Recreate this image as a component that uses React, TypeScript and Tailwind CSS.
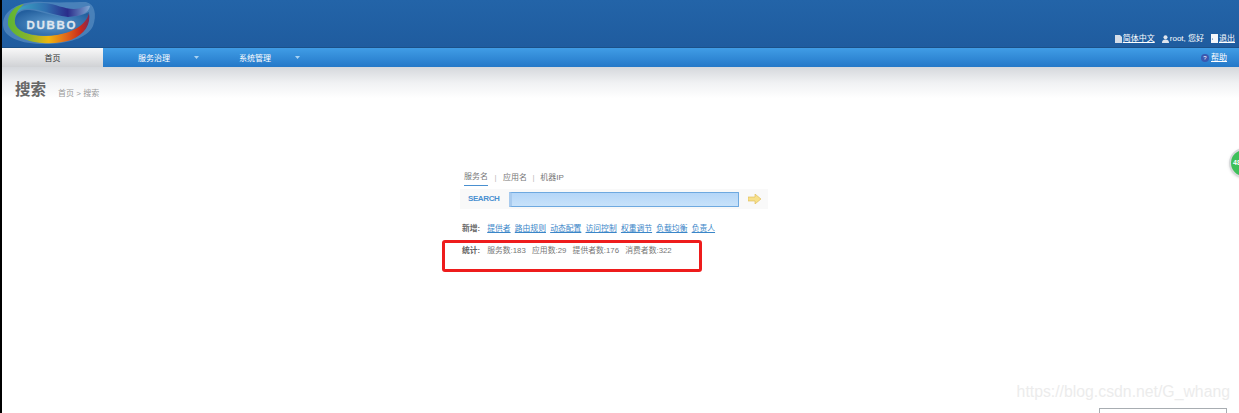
const CJK = "font-['Liberation_Sans','Noto_Sans_CJK_SC',sans-serif]";

const addLinks = ["提供者", "路由规则", "动态配置", "访问控制", "权重调节", "负载均衡", "负责人"];
const stats = ["服务数:183", "应用数:29", "提供者数:176", "消费者数:322"];

function Logo() {
  return (
    <svg width="98" height="47" viewBox="0 0 98 47" className="shrink-0">
      <defs>
        <linearGradient id="ring" x1="0" y1="0" x2="1" y2="0">
          <stop offset="0" stopColor="#5cb534" />
          <stop offset="0.25" stopColor="#86b52c" />
          <stop offset="0.5" stopColor="#efb60f" />
          <stop offset="0.72" stopColor="#e0651a" />
          <stop offset="0.9" stopColor="#c8281c" />
          <stop offset="1" stopColor="#7c2a58" />
        </linearGradient>
        <linearGradient id="top" x1="0" y1="0" x2="1" y2="0">
          <stop offset="0" stopColor="#3fb4c8" />
          <stop offset="0.45" stopColor="#2f6fb0" />
          <stop offset="0.72" stopColor="#2a2c8a" />
          <stop offset="1" stopColor="#7fa8d4" />
        </linearGradient>
        <radialGradient id="core" cx="0.5" cy="0.55" r="0.6">
          <stop offset="0" stopColor="#5f9ccf" />
          <stop offset="1" stopColor="#235f9e" />
        </radialGradient>
      </defs>
      <path d="M1 23C2 9 20 0 42 2C58 3 72 2 84 2C93 4 95 15 91 26C85 39 62 45 38 44C15 43 0 36 1 23Z" fill="#5a8fc2" opacity="0.7" />
      <path d="M8 20C12 7 28 2 42 3C54 4 62 9 72 9C80 9 84 5 88 6C87 13 78 17 66 17C50 15 34 7 22 9C15 11 11 15 8 20Z" fill="url(#top)" />
      <path d="M6 25C5 14 12 6 22 4C16 9 12 15 13 23C15 32 29 36 44 36C62 35 80 28 87 13C89 24 83 34 69 40C52 46 14 45 6 25Z" fill="url(#ring)" />
      <path d="M13 23C12 15 18 9 27 10C40 11 52 17 66 17C75 17 83 14 87 12C86 23 73 32 55 35C36 37 15 34 13 23Z" fill="url(#core)" />
      <text x="24.5" y="28.5" fontSize="11.5" fontWeight="700" letterSpacing="1.7" fill="#dfe6ee" fontFamily="'Liberation Sans',sans-serif" stroke="#dfe6ee" strokeWidth="0.3">DUBBO</text>
    </svg>
  );
}

function Caret() {
  return (
    <svg width="5" height="3" viewBox="0 0 5 3" className="absolute right-[5px] top-[8px]">
      <path d="M0 0H5L2.5 3Z" fill="#a9d3f3" />
    </svg>
  );
}

export default function App() {
  return (
    <div className={`relative w-[1239px] h-[413px] overflow-hidden bg-white ${CJK}`}>
      <div className="absolute left-0 top-0 z-20 h-[413px] w-[2px] bg-black" />

      <header className="flex h-[48px] items-stretch justify-between border-b border-[#1b5189] bg-gradient-to-b from-[#2364a8] to-[#1f5c9f] pl-[2px]">
        <Logo />
        <div className="flex items-end gap-[6px] pb-[3px] pr-[4px] text-[8px] leading-[11px] text-white">
          <span className="flex items-center gap-[1px]">
            <svg width="7" height="8" viewBox="0 0 7 8"><path d="M0 0H5L7 2V8H0Z" fill="#d5dde8" /></svg>
            <span className="underline">简体中文</span>
          </span>
          <span className="ml-[1px] flex items-center gap-[1px]">
            <svg width="7" height="8" viewBox="0 0 7 8"><circle cx="3.5" cy="2.2" r="2" fill="#dfe5ee" /><path d="M0 8C0 5 2 4.5 3.5 4.5S7 5 7 8Z" fill="#dfe5ee" /></svg>
            <span>root, 您好</span>
          </span>
          <span className="ml-[1px] flex items-center gap-[1px]">
            <svg width="7" height="9" viewBox="0 0 7 9"><path d="M0 0H7V9H0Z" fill="#f5f7fa" /><circle cx="1.5" cy="5" r="0.6" fill="#1f5c9f" /></svg>
            <span className="underline">退出</span>
          </span>
        </div>
      </header>

      <nav className="flex h-[19px] items-stretch justify-between bg-gradient-to-b from-[#409de6] to-[#2478c8] text-[8px] leading-[22px] text-white">
        <div className="flex">
          <div className="flex w-[103px] justify-center bg-gradient-to-b from-[#f8f8f8] to-[#d0d2d5] pl-[2px] text-[#333]">首页</div>
          <div className="relative flex w-[101px] justify-center pl-[1px]">
            服务治理
            <Caret />
          </div>
          <div className="relative flex w-[101px] justify-center pl-[1px]">
            系统管理
            <Caret />
          </div>
        </div>
        <div className="flex items-center gap-[2px] pr-[12px] pt-[1px] leading-[12px]">
          <span className="flex h-[8px] w-[8px] items-center justify-center rounded-full bg-[#3a58b0] text-[6px] leading-none">?</span>
          <span className="underline">帮助</span>
        </div>
      </nav>

      <div className="flex h-[39px] items-end gap-[12px] bg-gradient-to-b from-[#d5d8dc] via-[#f0f1f3] via-40% to-white to-80% pb-[6px] pl-[15px]">
        <h1 className="text-[15.5px] font-bold leading-[20px] text-[#666]">搜索</h1>
        <div className="pb-[1px] text-[8px] leading-[11px] text-[#999]">首页 &gt; 搜索</div>
      </div>

      <main className="ml-[460px] mt-[65px] w-[308px]">
        <div className="flex items-center pl-[4px] text-[8px] leading-[12px] text-[#777]">
          <span className="border-b border-[#4a90d0] pb-[2px]">服务名</span>
          <span className="mx-[6.5px] pb-[2px] text-[#bbb]">|</span>
          <span className="pb-[2px]">应用名</span>
          <span className="mx-[5.5px] pb-[2px] text-[#bbb]">|</span>
          <span className="pb-[2px]">机器IP</span>
        </div>
        <div className="mt-[3px] flex h-[20px] items-center bg-[#f9f9f9] pl-[8px]">
          <span className="w-[41px] text-[8px] font-bold leading-none tracking-[-0.4px] text-[#4a90d0]">SEARCH</span>
          <div className="h-[15px] w-[230px] rounded-[1px] border border-l-[3px] border-[#6ea9e0] border-l-[#a9cbee] bg-gradient-to-b from-[#b4d6f8] to-[#c8e2fa]" />
          <svg width="13" height="10" viewBox="0 0 13 10" className="ml-[9px]">
            <path d="M0 3H7V0L13 5L7 10V7H0Z" fill="#f7e08a" stroke="#dcb850" strokeWidth="0.6" />
          </svg>
        </div>
        <div className="mt-[14px] flex items-center pl-[2px] text-[7.8px] leading-[12px]">
          <span className="mr-[7px] font-bold text-[#666]">新增:</span>
          <div className="flex gap-[4.2px] text-[#3a86c8] underline">
            {addLinks.map((link) => (
              <span key={link}>{link}</span>
            ))}
          </div>
        </div>
        <div className="mt-[10px] flex items-center pl-[2px] text-[7.8px] leading-[12px] text-[#777]">
          <span className="mr-[7px] font-bold text-[#666]">统计:</span>
          <div className="flex gap-[6.3px]">
            {stats.map((stat) => (
              <span key={stat}>{stat}</span>
            ))}
          </div>
        </div>
      </main>

      {/* annotation and floats that lie over the page */}
      <div className="absolute left-[442px] top-[240px] h-[32px] w-[260px] rounded-[3px] border-[3px] border-[#ee1c1c]" />
      <div className="absolute left-[1229px] top-[148px] flex h-[30px] w-[30px] items-center rounded-full border-2 border-[#d8dadc] bg-[#3fc05a] pl-[2px] text-[7px] font-bold text-white shadow">
        48
      </div>
      <div className="absolute right-[9px] top-[383px] font-['Liberation_Sans',sans-serif] text-[15.8px] leading-[18px] text-[#ececec]">
        https://blog.csdn.net/G_whang
      </div>
      <div className="absolute left-[1099px] top-[408px] h-[20px] w-[128px] border border-[#a8adb2] bg-white" />
    </div>
  );
}
